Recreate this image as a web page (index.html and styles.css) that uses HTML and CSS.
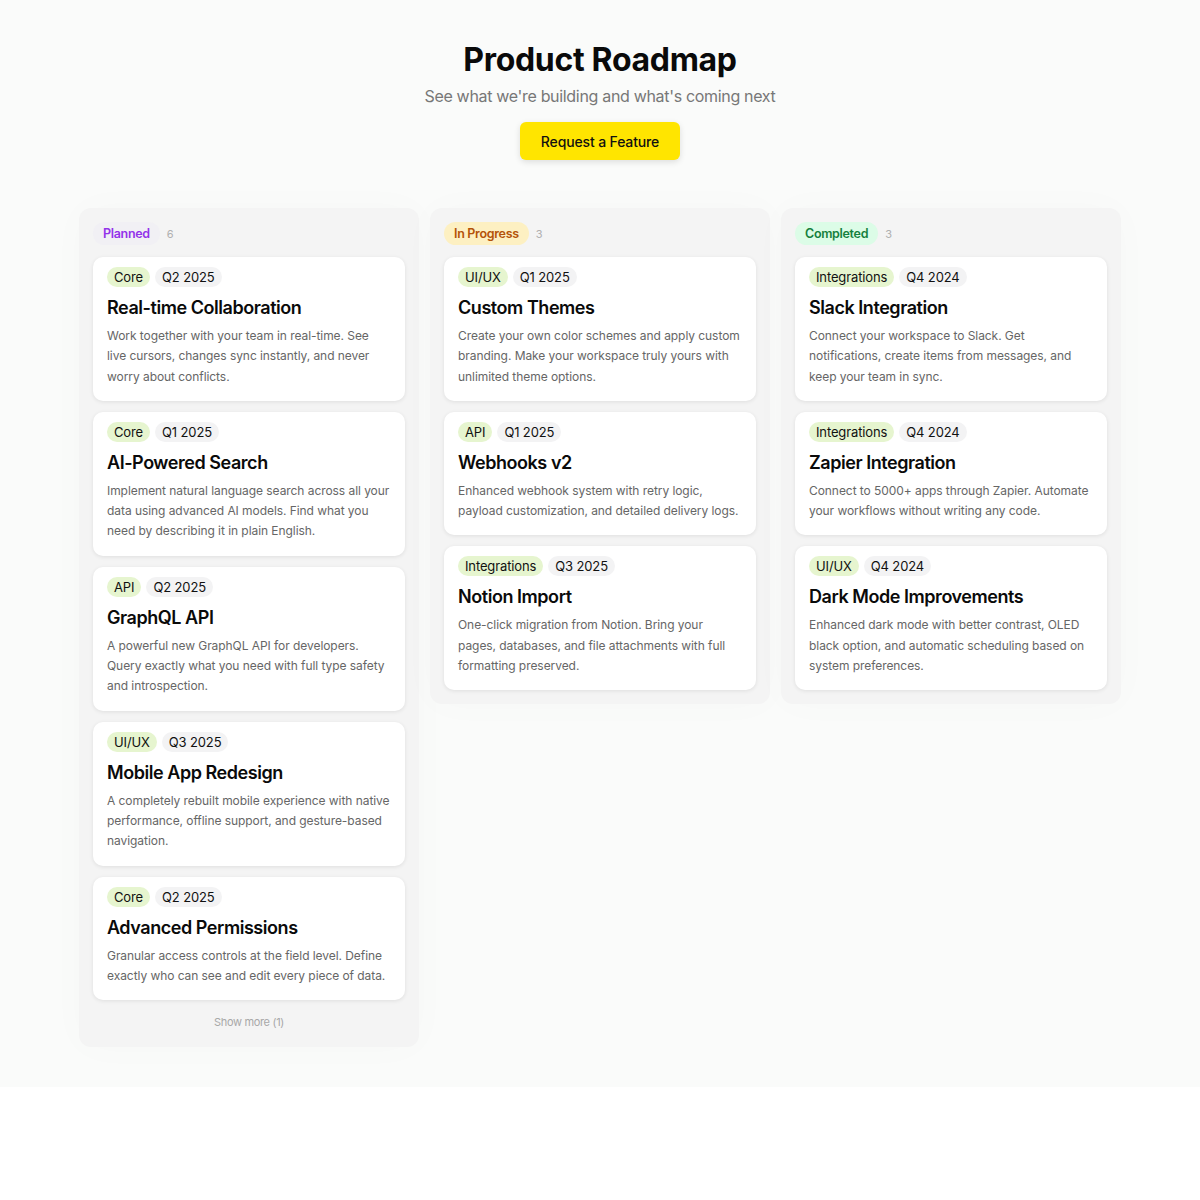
FILE: index.html
```html
<!DOCTYPE html>
<html lang="en">
<head>
    <meta charset="UTF-8">
    <meta name="viewport" content="width=device-width, initial-scale=1.0">
    <title>Product Roadmap</title>
    <link rel="stylesheet" href="styles.css">
</head>
<body>
    <div class="page">
        <header class="header">
            <h1>Product Roadmap</h1>
            <p class="subtitle">See what we're building and what's coming next</p>
            <button class="request-btn">Request a Feature</button>
        </header>

        <div class="board">
            <!-- Planned -->
            <section class="column">
                <div class="column-head">
                    <span class="status planned">Planned</span>
                    <span class="count">6</span>
                </div>

                <div class="card">
                    <div class="tags"><span class="tag area">Core</span><span class="tag date">Q2 2025</span></div>
                    <h3>Real-time Collaboration</h3>
                    <p>Work together with your team in real-time. See live cursors, changes sync instantly, and never worry about conflicts.</p>
                </div>
                <div class="card">
                    <div class="tags"><span class="tag area">Core</span><span class="tag date">Q1 2025</span></div>
                    <h3>AI-Powered Search</h3>
                    <p>Implement natural language search across all your data using advanced AI models. Find what you need by describing it in plain English.</p>
                </div>
                <div class="card">
                    <div class="tags"><span class="tag area">API</span><span class="tag date">Q2 2025</span></div>
                    <h3>GraphQL API</h3>
                    <p>A powerful new GraphQL API for developers. Query exactly what you need with full type safety and introspection.</p>
                </div>
                <div class="card">
                    <div class="tags"><span class="tag area">UI/UX</span><span class="tag date">Q3 2025</span></div>
                    <h3>Mobile App Redesign</h3>
                    <p>A completely rebuilt mobile experience with native performance, offline support, and gesture-based navigation.</p>
                </div>
                <div class="card">
                    <div class="tags"><span class="tag area">Core</span><span class="tag date">Q2 2025</span></div>
                    <h3>Advanced Permissions</h3>
                    <p>Granular access controls at the field level. Define exactly who can see and edit every piece of data.</p>
                </div>

                <button class="show-more">Show more (1)</button>
            </section>

            <!-- In Progress -->
            <section class="column">
                <div class="column-head">
                    <span class="status progress">In Progress</span>
                    <span class="count">3</span>
                </div>

                <div class="card">
                    <div class="tags"><span class="tag area">UI/UX</span><span class="tag date">Q1 2025</span></div>
                    <h3>Custom Themes</h3>
                    <p>Create your own color schemes and apply custom branding. Make your workspace truly yours with unlimited theme options.</p>
                </div>
                <div class="card">
                    <div class="tags"><span class="tag area">API</span><span class="tag date">Q1 2025</span></div>
                    <h3>Webhooks v2</h3>
                    <p>Enhanced webhook system with retry logic, payload customization, and detailed delivery logs.</p>
                </div>
                <div class="card">
                    <div class="tags"><span class="tag area">Integrations</span><span class="tag date">Q3 2025</span></div>
                    <h3>Notion Import</h3>
                    <p>One-click migration from Notion. Bring your pages, databases, and file attachments with full formatting preserved.</p>
                </div>
            </section>

            <!-- Completed -->
            <section class="column">
                <div class="column-head">
                    <span class="status done">Completed</span>
                    <span class="count">3</span>
                </div>

                <div class="card">
                    <div class="tags"><span class="tag area">Integrations</span><span class="tag date">Q4 2024</span></div>
                    <h3>Slack Integration</h3>
                    <p>Connect your workspace to Slack. Get notifications, create items from messages, and keep your team in sync.</p>
                </div>
                <div class="card">
                    <div class="tags"><span class="tag area">Integrations</span><span class="tag date">Q4 2024</span></div>
                    <h3>Zapier Integration</h3>
                    <p>Connect to 5000+ apps through Zapier. Automate your workflows without writing any code.</p>
                </div>
                <div class="card">
                    <div class="tags"><span class="tag area">UI/UX</span><span class="tag date">Q4 2024</span></div>
                    <h3>Dark Mode Improvements</h3>
                    <p>Enhanced dark mode with better contrast, OLED black option, and automatic scheduling based on system preferences.</p>
                </div>
            </section>
        </div>
    </div>
</body>
</html>
```

FILE: styles.css
```css
body {
    margin: 0;
    background: #ffffff;
    font-family: Inter, "Noto Sans", sans-serif;
    letter-spacing: -0.02em;
    color: #111;
}

.page {
    background: #fafbfa;
    padding: 40px 0 40px;
}

.header {
    display: flex;
    flex-direction: column;
    align-items: center;
}

h1 {
    margin: 0;
    font-size: 32px;
    line-height: 40px;
    font-weight: 700;
    color: #0a0a0a;
}

.subtitle {
    margin: 4px 0 0;
    font-size: 16px;
    line-height: 24px;
    color: #777;
}

.request-btn {
    margin-top: 14px;
    height: 38px;
    width: 160px;
    border: none;
    border-radius: 6px;
    background: #ffe500;
    font-family: inherit;
    font-size: 14px;
    font-weight: 500;
    letter-spacing: -0.01em;
    color: #111;
    box-shadow: 0 2px 6px rgba(0, 0, 0, 0.12);
}

.board {
    width: 1042px;
    margin: 48px auto 0;
    display: grid;
    grid-template-columns: repeat(3, 1fr);
    gap: 11px;
    align-items: start;
}

.column {
    background: #f4f4f4;
    border-radius: 12px;
    padding: 14px;
    display: flex;
    flex-direction: column;
    gap: 11px;
    box-shadow: 0 0 40px rgba(0, 0, 0, 0.02);
}

.column-head {
    display: flex;
    align-items: center;
    gap: 7px;
    height: 23px;
    margin-bottom: 1px;
}

.status {
    font-size: 12.5px;
    font-weight: 600;
    line-height: 23px;
    padding: 0 10px;
    border-radius: 999px;
}

.status.planned {
    background: #f1f0f4;
    color: #9333ea;
}

.status.progress {
    background: #fdf0c2;
    color: #b45309;
}

.status.done {
    background: #dcfce7;
    color: #15803d;
}

.count {
    font-size: 11px;
    color: #b0b0b0;
}

.card {
    background: #fff;
    border-radius: 10px;
    padding: 10px 14px 14px;
    box-shadow: 0 1px 4px rgba(0, 0, 0, 0.09);
}

.tags {
    display: flex;
    gap: 5px;
}

.tag {
    font-size: 13px;
    line-height: 20px;
    padding: 0 7px;
    border-radius: 999px;
    letter-spacing: -0.01em;
    color: #111;
}

.tag.area {
    background: #e6f5cf;
}

.tag.date {
    background: #f3f3f4;
}

.card h3 {
    margin: 9px 0 6px;
    font-size: 18px;
    line-height: 24px;
    font-weight: 600;
    letter-spacing: -0.025em;
    color: #0a0a0a;
}

.card p {
    margin: 0;
    font-size: 12px;
    line-height: 20.3px;
    letter-spacing: -0.005em;
    color: #666;
}

.show-more {
    align-self: center;
    margin-top: 0;
    border: none;
    background: none;
    font-family: inherit;
    font-size: 11px;
    letter-spacing: -0.03em;
    color: #a8a8a8;
    padding: 4px 0;
}
```
